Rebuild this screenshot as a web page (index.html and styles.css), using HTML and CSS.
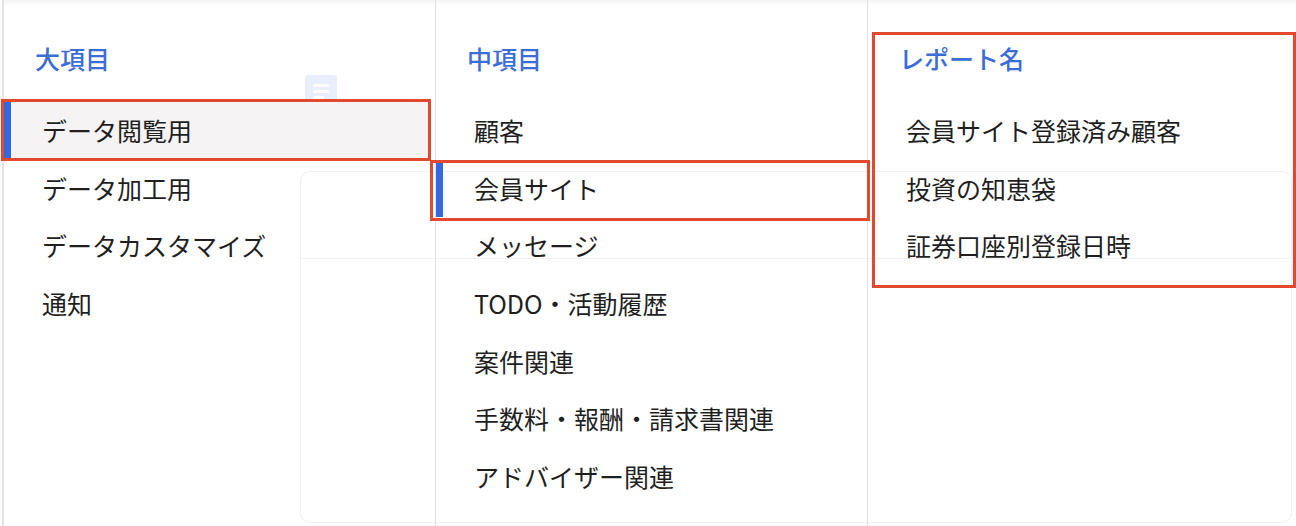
FILE: index.html
```html
<!DOCTYPE html>
<html lang="ja">
<head>
<meta charset="utf-8">
<title>レポート選択</title>
<link rel="stylesheet" href="styles.css">
</head>
<body>
  <div class="page">
    <div class="page-icon">
      <svg width="32" height="32" viewBox="0 0 32 32">
        <rect x="0" y="0" width="32" height="32" rx="4" fill="#e9eefb"/>
        <rect x="8" y="9" width="16" height="3" rx="1.5" fill="#ffffff"/>
        <rect x="8" y="15" width="16" height="3" rx="1.5" fill="#ffffff"/>
        <rect x="8" y="21" width="11" height="3" rx="1.5" fill="#ffffff"/>
      </svg>
    </div>
    <div class="page-card">
      <div class="page-card-row"></div>
    </div>
  </div>

  <div class="menu">
    <div class="col col-1">
      <div class="col-title">大項目</div>
      <ul class="list">
        <li class="item item-active item-filled">データ閲覧用</li>
        <li class="item">データ加工用</li>
        <li class="item">データカスタマイズ</li>
        <li class="item">通知</li>
      </ul>
    </div>
    <div class="col col-2">
      <div class="col-title">中項目</div>
      <ul class="list">
        <li class="item">顧客</li>
        <li class="item item-active">会員サイト</li>
        <li class="item">メッセージ</li>
        <li class="item">TODO・活動履歴</li>
        <li class="item">案件関連</li>
        <li class="item">手数料・報酬・請求書関連</li>
        <li class="item">アドバイザー関連</li>
      </ul>
    </div>
    <div class="col col-3">
      <div class="col-title">レポート名</div>
      <ul class="list">
        <li class="item">会員サイト登録済み顧客</li>
        <li class="item">投資の知恵袋</li>
        <li class="item">証券口座別登録日時</li>
      </ul>
    </div>
  </div>

  <div class="mark mark-1"></div>
  <div class="mark mark-2"></div>
  <div class="mark mark-3"></div>
</body>
</html>
```

FILE: styles.css
```css
* { box-sizing: border-box; }

html, body {
  margin: 0;
  padding: 0;
  width: 1296px;
  height: 526px;
  overflow: hidden;
  background: #ffffff;
  font-family: "Noto Sans CJK JP", "Noto Sans", sans-serif;
}

body { position: relative; }

/* background page (faint, behind the menu) */
.page {
  padding: 75px 0 0 300px;
}

.page-icon {
  margin-left: 5px;
  width: 32px;
  height: 32px;
}

.page-icon svg { display: block; }

.page-card {
  margin-top: 64px;
  width: 992px;
  height: 352px;
  border: 1px solid #f1f1f4;
  border-radius: 10px;
}

.page-card-row {
  height: 87px;
  border-bottom: 1px solid #f1f1f3;
}

/* menu overlay */
.menu {
  position: absolute;
  top: 0;
  left: 2px;
  right: 0;
  bottom: 0;
  display: flex;
  border-left: 2px solid #e4e4ea;
  box-shadow: inset 0 5px 5px -3px rgba(0, 0, 0, 0.06);
}

.col {
  width: 432px;
  border-right: 1px solid #e2e2e4;
}

.col-3 {
  flex: 1;
  border-right: none;
}

.col-title {
  margin-top: 40px;
  padding-left: 31px;
  height: 36px;
  line-height: 36px;
  font-size: 25px;
  font-weight: 500;
  color: #3b6dd6;
}

.list {
  list-style: none;
  margin: 26px 0 0 0;
  padding: 0;
}

.item {
  height: 57.67px;
  line-height: 57.67px;
  padding-left: 38px;
  font-size: 25px;
  color: #1f1f1f;
  white-space: nowrap;
}

.item-active {
  border-left: 7px solid #3567e0;
  padding-left: 31px;
}

.item-filled {
  background: #f5f3f4;
  margin-right: 6px;
}

/* red annotation frames */
.mark {
  position: absolute;
  border: 3px solid #e2492f;
  pointer-events: none;
}

.mark-1 { left: 1px; top: 99px; width: 430px; height: 62px; }
.mark-2 { left: 430px; top: 160px; width: 440px; height: 61px; }
.mark-3 { left: 872px; top: 32px; width: 424px; height: 256px; }
```
